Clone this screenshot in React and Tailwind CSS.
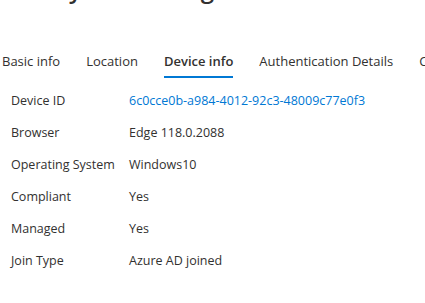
export default function App() {
  const filas = [
    { label: 'Device ID', value: '6c0cce0b-a984-4012-92c3-48009c77e0f3', link: true },
    { label: 'Browser', value: 'Edge 118.0.2088' },
    { label: 'Operating System', value: 'Windows10' },
    { label: 'Compliant', value: 'Yes' },
    { label: 'Managed', value: 'Yes' },
    { label: 'Join Type', value: 'Azure AD joined' },
  ];

  const tabs = ['Basic info', 'Location', 'Device info', 'Authentication Details', 'Conditional Access'];

  return (
    <div
      className="w-[425px] h-[303px] overflow-hidden bg-white text-[#323130]"
      style={{ fontFamily: '"Open Sans", "Noto Sans", sans-serif' }}
    >
      {/* Titulo recortado arriba */}
      <h1 className="mt-[-27px] ml-[-4px] whitespace-nowrap text-[24px] leading-[32px] font-semibold text-[#323130]">
        Activity Details: Sign-ins
      </h1>

      {/* Tabs */}
      <div className="mt-[41px] ml-[2px] flex gap-[26px] whitespace-nowrap text-[13px]">
        {tabs.map(tab => (
          <div key={tab} className="relative flex h-[32px] items-center">
            <span className={tab === 'Device info' ? 'font-semibold' : ''}>{tab}</span>
            {tab === 'Device info' && (
              <span className="absolute bottom-0 left-0 right-0 h-[2px] bg-[#0078d4]" />
            )}
          </div>
        ))}
      </div>

      {/* Detalles */}
      <div className="mt-[7px] ml-[11px] flex flex-col text-[12.5px]">
        {filas.map(fila => (
          <div key={fila.label} className="flex h-[32px] items-center">
            <span className="w-[118px] shrink-0">{fila.label}</span>
            <span className={fila.link ? 'text-[#0078d4]' : ''}>{fila.value}</span>
          </div>
        ))}
      </div>
    </div>
  );
}
